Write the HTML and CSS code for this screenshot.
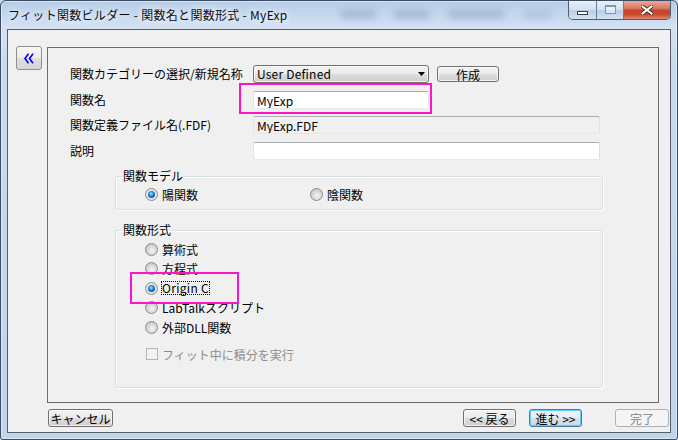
FILE: index.html
```html
<!DOCTYPE html>
<html lang="ja">
<head>
<meta charset="utf-8">
<title>フィット関数ビルダー</title>
<link rel="stylesheet" href="styles.css">
</head>
<body>
<div class="window">
  <div class="titlebar">
    <span class="title">フィット関数ビルダー - 関数名と関数形式 - MyExp</span>
    <div class="glass">
      <i class="smudge s1"></i><i class="smudge s2"></i><i class="smudge s3"></i><i class="smudge s4"></i>
    </div>
    <div class="caption">
      <div class="cbtn cmin"><span class="min-glyph"></span></div>
      <div class="cbtn cmax"><span class="max-glyph"></span></div>
      <div class="cbtn cclose">
        <svg width="12" height="10" viewBox="0 0 12 10">
          <path d="M1.5 1.5 L10.5 8.5 M10.5 1.5 L1.5 8.5" stroke="#3b2420" stroke-width="3.6" stroke-linecap="square" fill="none"/>
          <path d="M1.5 1.5 L10.5 8.5 M10.5 1.5 L1.5 8.5" stroke="#ffffff" stroke-width="2" stroke-linecap="square" fill="none"/>
        </svg>
      </div>
    </div>
  </div>
  <div class="middle">
    <div class="client">
      <div class="top">
        <button class="collapse" type="button">
          <svg width="10" height="11" viewBox="0 0 10 11">
            <polyline points="4.5,0.8 1,5.5 4.5,10.2" fill="none" stroke="#0000ee" stroke-width="1.6"/>
            <polyline points="9,0.8 5.5,5.5 9,10.2" fill="none" stroke="#0000ee" stroke-width="1.6"/>
          </svg>
        </button>
        <div class="panel">
          <div class="form">
            <label class="lbl">関数カテゴリーの選択/新規名称</label>
            <div class="field">
              <div class="combo"><span class="combo-text">User Defined</span>
                <svg class="arrow" width="7" height="4" viewBox="0 0 7 4"><polygon points="0,0 7,0 3.5,4" fill="#000"/></svg>
              </div>
              <button class="btn make" type="button">作成</button>
            </div>
            <label class="lbl">関数名</label>
            <div class="field"><input class="input short" value="MyExp"></div>
            <label class="lbl">関数定義ファイル名(.FDF)</label>
            <div class="field"><input class="input wide ro" value="MyExp.FDF" readonly></div>
            <label class="lbl">説明</label>
            <div class="field"><input class="input wide" value=""></div>
          </div>

          <fieldset class="group g1">
            <legend>関数モデル</legend>
            <div class="opts-row">
              <div class="opt first"><span class="radio on"></span><span>陽関数</span></div>
              <div class="opt"><span class="radio"></span><span>陰関数</span></div>
            </div>
          </fieldset>

          <fieldset class="group g2">
            <legend>関数形式</legend>
            <div class="opt row r1"><span class="radio"></span><span>算術式</span></div>
            <div class="opt row r2"><span class="radio"></span><span>方程式</span></div>
            <div class="opt row r3"><span class="radio on"></span><span class="focus">Origin C</span></div>
            <div class="opt row r4"><span class="radio"></span><span>LabTalkスクリプト</span></div>
            <div class="opt row r5"><span class="radio"></span><span>外部DLL関数</span></div>
            <div class="opt row chk"><span class="checkbox"></span><span class="disabled-text">フィット中に積分を実行</span></div>
          </fieldset>
        </div>
      </div>
      <div class="footer">
        <button class="btn cancel" type="button">キャンセル</button>
        <span class="spacer"></span>
        <button class="btn nav" type="button">&lt;&lt; 戻る</button>
        <button class="btn nav next" type="button">進む &gt;&gt;</button>
        <button class="btn nav done" type="button">完了</button>
      </div>
    </div>
  </div>
  <div class="mark mark-name"></div>
  <div class="mark mark-origin"></div>
</div>
</body>
</html>
```

FILE: styles.css
```css
* { box-sizing: border-box; }

body {
  margin: 0;
  background: #c8d8ec;
}

.window {
  position: relative;
  width: 678px;
  height: 440px;
  border: 1px solid #3b4d63;
  border-radius: 6px 6px 3px 3px;
  background: linear-gradient(to bottom, #b7cce6 0, #c3d6ee 12px, #d4e2f3 27px, #cadaee 60px, #c2d4ea 100%);
  box-shadow: inset 0 0 0 1px rgba(255, 255, 255, 0.45);
  overflow: hidden;
  font-family: "Noto Sans CJK JP", "Noto Sans", sans-serif;
  font-size: 12px;
  color: #000;
}

/* ---------- title bar ---------- */
.titlebar {
  display: flex;
  align-items: flex-start;
  height: 28px;
}

.title {
  margin: 6px 0 0 7px;
  line-height: 16px;
  letter-spacing: 0.3px;
  white-space: nowrap;
  color: #0c0c14;
  text-shadow: 0 0 6px rgba(255, 255, 255, 0.95), 0 0 10px rgba(255, 255, 255, 0.8);
}

.glass {
  display: flex;
  margin: 9px 15px 0 auto;
  height: 10px;
}

.smudge {
  display: block;
  height: 9px;
  border-radius: 5px;
  background: rgba(80, 100, 132, 0.25);
  filter: blur(3.5px);
}
.s1 { width: 37px; }
.s2 { width: 37px; margin-left: 16px; }
.s3 { width: 57px; margin-left: 18px; }
.s4 { width: 30px; margin-left: 18px; opacity: 0.6; }

.caption {
  display: flex;
  height: 19px;
  margin-right: 6px;
  border: 1px solid #4d5f78;
  border-top: none;
  border-radius: 0 0 5px 5px;
  overflow: hidden;
}

.cbtn {
  display: flex;
  align-items: center;
  justify-content: center;
  height: 100%;
}

.cmin, .cmax {
  background: linear-gradient(to bottom, rgba(255,255,255,0.65) 0, rgba(235,242,250,0.45) 50%, rgba(175,198,226,0.55) 50%, rgba(214,229,246,0.7) 100%);
  border-right: 1px solid #6b7e97;
}
.cmin { width: 28px; }
.cmax { width: 27px; }

.min-glyph {
  width: 11px;
  height: 4px;
  margin-top: 6px;
  background: #fff;
  border: 1px solid #2f3f58;
}

.max-glyph {
  width: 11px;
  height: 9px;
  margin-top: -1px;
  border: 1px solid #8794a6;
  border-top-width: 2px;
  background: rgba(255, 255, 255, 0.45);
}

.cclose {
  width: 46px;
  background: linear-gradient(to bottom, #e9a899 0, #d97a66 40%, #c6452a 52%, #c94a2f 75%, #e08a6a 100%);
}

/* ---------- frame & client ---------- */
.middle {
  display: flex;
  height: 404px;
  padding: 0 6px;
}

.client {
  width: 664px;
  height: 404px;
  border: 1px solid #56606c;
  background: #f0f0f0;
  display: flex;
  flex-direction: column;
}

.top {
  display: flex;
  align-items: flex-start;
}

.collapse {
  display: flex;
  align-items: center;
  justify-content: center;
  margin: 16px 0 0 8px;
  padding: 0;
  width: 26px;
  height: 24px;
  border: 1px solid #8f8f8f;
  border-radius: 3px;
  background: linear-gradient(to bottom, #f6f6f6 0, #eeeeee 50%, #dedede 50%, #d6d6d6 100%);
}

.panel {
  margin: 17px 0 0 5px;
  width: 612px;
  height: 356px;
  border: 1px solid #6b6b6b;
}

/* ---------- form ---------- */
.form {
  display: grid;
  grid-template-columns: 183px 1fr;
  grid-template-rows: 26px 25px 26px 18px;
  margin: 17px 0 0 22px;
  align-items: start;
}

.lbl {
  height: 18px;
  line-height: 18px;
  white-space: nowrap;
}

.field {
  display: flex;
  align-items: flex-start;
}

.btn {
  height: 18px;
  padding: 0;
  border: 1px solid #707070;
  border-radius: 3px;
  background: linear-gradient(to bottom, #f2f2f2 0, #ebebeb 50%, #dddddd 50%, #cfcfcf 100%);
  box-shadow: inset 0 0 0 1px rgba(255, 255, 255, 0.7);
  font-family: inherit;
  font-size: 12px;
  line-height: 15px;
  color: #000;
  text-align: center;
  white-space: nowrap;
}

.combo {
  display: flex;
  align-items: center;
  width: 176px;
  height: 18px;
  padding: 0 3px;
  border: 1px solid #707070;
  border-radius: 3px;
  background: linear-gradient(to bottom, #f2f2f2 0, #ebebeb 50%, #dddddd 50%, #cfcfcf 100%);
  box-shadow: inset 0 0 0 1px rgba(255, 255, 255, 0.7);
}

.combo-text {
  line-height: 16px;
  letter-spacing: 0.2px;
}

.arrow {
  margin-left: auto;
  margin-right: 0;
}

.make {
  width: 62px;
  height: 16px;
  margin: 1px 0 0 8px;
  line-height: 13px;
}

.input {
  display: block;
  height: 18px;
  margin: 0;
  padding: 0 3px;
  border: 1px solid;
  border-color: #abadb3 #dbdfe6 #e3e9ef #e2e3ea;
  border-radius: 2px;
  background: #fff;
  font-family: inherit;
  font-size: 12px;
  line-height: 16px;
  color: #000;
  outline: none;
}
.short { width: 176px; }
.wide { width: 347px; }
.ro { background: #f0f0f0; }

/* ---------- group boxes ---------- */
.group {
  width: 488px;
  margin: 0 0 0 67px;
  min-inline-size: 0;
  border: 1px solid #d5dfe5;
  border-radius: 3px;
  box-shadow: 1px 1px 0 #ffffff, inset 1px 1px 0 #ffffff;
}

.group legend {
  padding: 0 1px;
  line-height: 16px;
}

.g1 {
  margin-top: 8px;
  padding: 1px 6px 6px;
}

.g2 {
  margin-top: 12px;
  padding: 2px 6px 24px;
}

.opts-row {
  display: flex;
  padding-left: 23px;
}

.opt {
  display: flex;
  align-items: center;
  height: 18px;
  white-space: nowrap;
}

.opt.first { width: 165px; }

.row { margin-left: 23px; }
.r1 { margin-bottom: 1px; }
.r2 { margin-bottom: 2px; }
.r3 { margin-bottom: 1px; }
.r4 { margin-bottom: 2px; }
.chk { margin-top: 9px; margin-left: 24px; }

.radio {
  display: flex;
  align-items: center;
  justify-content: center;
  flex: none;
  width: 13px;
  height: 13px;
  margin-right: 4px;
  border: 1px solid #8b8c8c;
  border-radius: 50%;
  background: radial-gradient(circle at 55% 60%, #f6f6f6 0, #dcdcdc 40%, #c2c2c2 85%, #d6d6d6 100%);
}

.radio.on {
  background: radial-gradient(circle at 50% 50%, #f3f3f3 0, #e6e6e6 60%, #c8c8c8 100%);
}

.radio.on::after {
  content: "";
  width: 7px;
  height: 7px;
  border-radius: 50%;
  background: radial-gradient(circle at 45% 40%, #b5e6ff 0, #3c9fe6 30%, #1663a8 60%, #0d3b6e 100%);
}

.focus {
  margin-left: -1px;
  border: 1px dotted #000;
  line-height: 12px;
  letter-spacing: 0.3px;
}

.checkbox {
  flex: none;
  width: 12px;
  height: 12px;
  margin-right: 4px;
  border: 1px solid #b4b4b4;
  background: #f4f4f4;
}

.disabled-text {
  color: #8d8d8d;
}

/* ---------- footer ---------- */
.footer {
  display: flex;
  align-items: flex-start;
  height: 18px;
  margin-top: 6px;
  padding: 0 1px 0 40px;
}

.spacer { flex: 1; }

.cancel { width: 65px; }

.nav { width: 53px; }
.next {
  margin-left: 13px;
  border-color: #3c7fb1;
  background: linear-gradient(to bottom, #eef3f8 0, #e6edf3 50%, #d8e2ea 50%, #ccd8e2 100%);
  box-shadow: inset 0 0 0 1px #5fcdf6;
}
.done {
  width: 54px;
  margin-left: 33px;
  border-color: #adb2b5;
  background: #f4f4f4;
  box-shadow: none;
  color: #838383;
}

/* ---------- annotation marks ---------- */
.mark {
  position: absolute;
  border: 2px solid #ff12c8;
  pointer-events: none;
}
.mark-name {
  left: 238px;
  top: 82px;
  width: 193px;
  height: 31px;
}
.mark-origin {
  left: 129px;
  top: 271px;
  width: 109px;
  height: 32px;
}
```
